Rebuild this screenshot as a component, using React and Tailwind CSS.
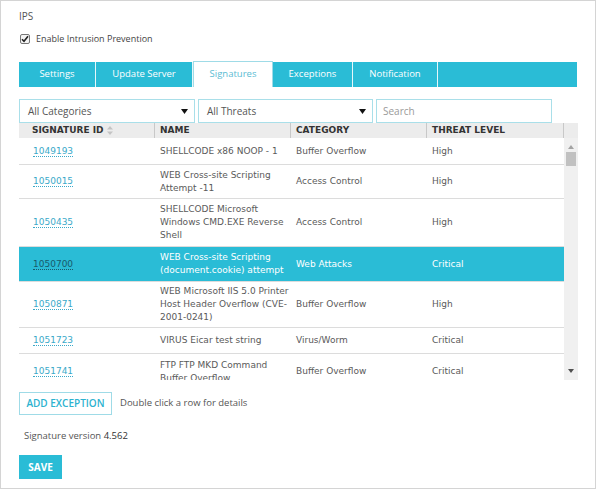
import React from "react";

const ui = { fontFamily: '"Open Sans", "Liberation Sans", sans-serif' };
const tbl = { fontFamily: '"DejaVu Sans", Verdana, sans-serif' };

const rows = [
  { id: "1049193", name: ["SHELLCODE x86 NOOP - 1"], cat: "Buffer Overflow", lvl: "High", h: "h-[27px]" },
  { id: "1050015", name: ["WEB Cross-site Scripting", "Attempt -11"], cat: "Access Control", lvl: "High", h: "h-[34px]" },
  { id: "1050435", name: ["SHELLCODE Microsoft", "Windows CMD.EXE Reverse", "Shell"], cat: "Access Control", lvl: "High", h: "h-[48px]" },
  { id: "1050700", name: ["WEB Cross-site Scripting", "(document.cookie) attempt"], cat: "Web Attacks", lvl: "Critical", h: "h-[35px]", sel: true },
  { id: "1050871", name: ["WEB Microsoft IIS 5.0 Printer", "Host Header Overflow (CVE-", "2001-0241)"], cat: "Buffer Overflow", lvl: "High", h: "h-[46px]" },
  { id: "1051723", name: ["VIRUS Eicar test string"], cat: "Virus/Worm", lvl: "Critical", h: "h-[26px]" },
  { id: "1051741", name: ["FTP FTP MKD Command", "Buffer Overflow"], cat: "Buffer Overflow", lvl: "Critical", h: "h-[36px]" },
];

function Tab({ label, active, w }) {
  return (
    <div
      className={
        "flex items-center justify-center text-[9.5px] " +
        w +
        (active
          ? " bg-white text-[#5bbcd3] border border-b-0 border-[#9fdbe7] h-[26px] -mt-[1px]"
          : " text-white border-r border-[#e6f7fa] h-[25px]")
      }
    >
      {label}
    </div>
  );
}

function Select({ label, w }) {
  return (
    <div className={"h-[24px] border border-[#a9dfe9] bg-white flex items-center justify-between pl-[8px] pr-[6px] text-[10px] text-[#555] " + w}>
      <span>{label}</span>
      <svg width="7" height="5" viewBox="0 0 7 5"><path d="M0 0h7L3.5 5z" fill="#111" /></svg>
    </div>
  );
}

export default function App() {
  return (
    <div className="w-[596px] h-[489px] border border-[#d4d4d4] bg-white relative overflow-hidden" style={ui}>
      <div className="pl-[18px] pt-[9px]">
        <div className="text-[10px] text-[#555] leading-[12px]">IPS</div>
        <div className="flex items-center mt-[10px] h-[14px]">
          <div className="w-[10px] h-[10px] border border-[#777] rounded-[2px] bg-[#f4f4f4] flex items-center justify-center ml-[1px]">
            <svg width="8" height="8" viewBox="0 0 8 8"><path d="M1 4.2l2 2L7 1.2" stroke="#222" strokeWidth="1.6" fill="none" /></svg>
          </div>
          <span className="ml-[6px] text-[9px] text-[#444]">Enable Intrusion Prevention</span>
        </div>

        <div className="mt-[16px] w-[558px] h-[25px] bg-[#2abcd6] flex items-start">
          <Tab label="Settings" w="w-[77px]" />
          <Tab label="Update Server" w="w-[97px]" />
          <Tab label="Signatures" w="w-[80px]" active />
          <Tab label="Exceptions" w="w-[80px]" />
          <Tab label="Notification" w="w-[85px]" />
        </div>

        <div className="mt-[12px] flex gap-[3px]">
          <Select label="All Categories" w="w-[176px]" />
          <Select label="All Threats" w="w-[175px]" />
          <div className="h-[24px] w-[176px] border border-[#a9dfe9] bg-white flex items-center pl-[6px] text-[10px] text-[#9a9a9a]">Search</div>
        </div>

        <div className="w-[559px] flex" style={tbl}>
          <div className="w-[545px]">
            <div className="h-[15px] bg-[#ececec] flex text-[9px] font-bold text-[#333] items-center">
              <div className="w-[136px] pl-[13px] flex items-center border-r border-[#c8c8c8] h-full">
                SIGNATURE ID
                <svg className="ml-[3px]" width="6" height="9" viewBox="0 0 6 9"><path d="M0 3.5L3 0l3 3.5zM0 5.5L3 9l3-3.5z" fill="#c4c4c4" /></svg>
              </div>
              <div className="w-[136px] pl-[5px] flex items-center border-r border-[#c8c8c8] h-full">NAME</div>
              <div className="w-[136px] pl-[5px] flex items-center border-r border-[#c8c8c8] h-full">CATEGORY</div>
              <div className="w-[137px] pl-[5px] flex items-center border-r border-[#c8c8c8] h-full">THREAT LEVEL</div>
            </div>
            <div className="h-[242px] overflow-hidden">
              {rows.map((r) => (
                <div
                  key={r.id}
                  className={
                    "flex items-center border-b border-[#dcdcdc] text-[9px] leading-[13px] " +
                    r.h +
                    (r.sel ? " bg-[#2abcd6] text-white" : " text-[#5a5a5a]")
                  }
                >
                  <div className="w-[136px] pl-[14px]">
                    <span
                      className={
                        "border-b border-dotted " +
                        (r.sel ? "text-[#195a6b] border-[#195a6b]" : "text-[#3aa9c9] border-[#3aa9c9]")
                      }
                    >
                      {r.id}
                    </span>
                  </div>
                  <div className="w-[136px] pl-[5px]">
                    {r.name.map((n, i) => (
                      <div key={i} className="whitespace-nowrap">{n}</div>
                    ))}
                  </div>
                  <div className="w-[136px] pl-[5px]">{r.cat}</div>
                  <div className="w-[137px] pl-[5px]">{r.lvl}</div>
                </div>
              ))}
            </div>
          </div>
          <div className="w-[14px] flex flex-col">
            <div className="h-[15px] bg-[#ececec]"></div>
            <div className="flex-1 bg-[#f0f0f0] flex flex-col items-center">
              <svg className="mt-[7px]" width="6" height="4" viewBox="0 0 6 4"><path d="M0 4L3 0l3 4z" fill="#a3a3a3" /></svg>
              <div className="mt-[3px] w-[10px] h-[14px] bg-[#c1c1c1]"></div>
              <div className="flex-1"></div>
              <svg className="mb-[7px]" width="6" height="4" viewBox="0 0 6 4"><path d="M0 0h6L3 4z" fill="#505050" /></svg>
            </div>
          </div>
        </div>

        <div className="mt-[12px] flex items-center">
          <div className="h-[23px] w-[93px] border border-[#9fdbe7] flex items-center justify-center text-[10px] font-semibold text-[#2cb2cf]">
            ADD EXCEPTION
          </div>
          <span className="ml-[8px] text-[9.5px] text-[#555]">Double click a row for details</span>
        </div>

        <div className="mt-[14px] ml-[5px] text-[9.5px] text-[#555] leading-[13px]">
          Signature version <span className="text-[#333]">4.562</span>
        </div>

        <div className="mt-[13px] h-[24px] w-[43px] bg-[#2abcd6] flex items-center justify-center text-[10px] font-bold text-white">
          SAVE
        </div>
      </div>
    </div>
  );
}
